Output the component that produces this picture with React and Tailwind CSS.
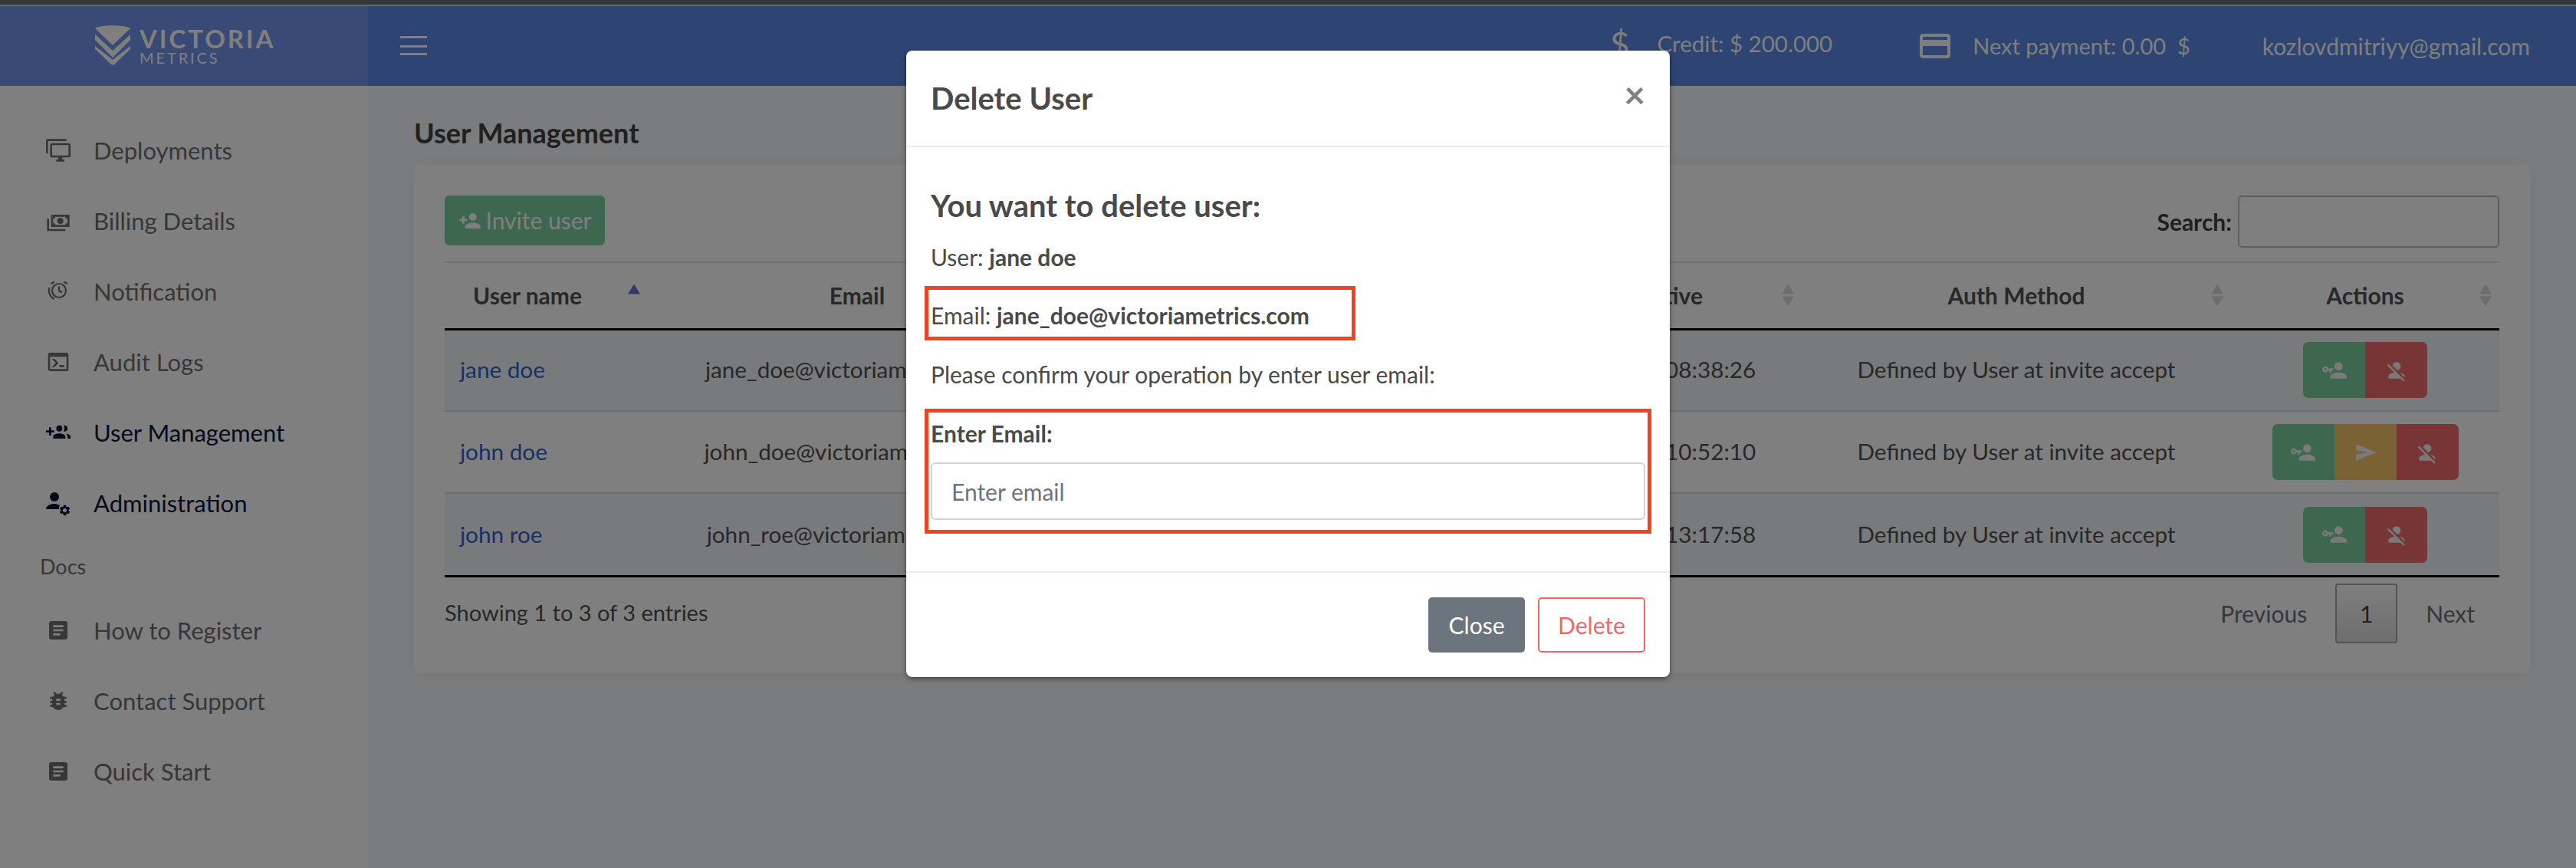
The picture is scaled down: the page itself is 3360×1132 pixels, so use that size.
import React from "react";
import { MdArticle, MdBugReport, MdCreditCard, MdSettings } from "react-icons/md";

const Mdi = ({ d, className }) => (
  <svg viewBox="0 0 24 24" className={className} fill="currentColor"><path d={d} /></svg>
);
const P = {
  monitor: "M22,17V7H6V17H22M22,5A2,2 0 0,1 24,7V17C24,18.11 23.1,19 22,19H16V21H18V23H10V21H12V19H6C4.89,19 4,18.11 4,17V7A2,2 0 0,1 6,5H22M2,3V15H0V3A2,2 0 0,1 2,1H20V3H2Z",
  cash: "M5,6H23V18H5V6M14,9A3,3 0 0,1 17,12A3,3 0 0,1 14,15A3,3 0 0,1 11,12A3,3 0 0,1 14,9M9,8A2,2 0 0,1 7,10V14A2,2 0 0,1 9,16H19A2,2 0 0,1 21,14V10A2,2 0 0,1 19,8H9M1,10H3V20H19V22H1V10Z",
  console: "M20,19V7H4V19H20M20,3A2,2 0 0,1 22,5V19A2,2 0 0,1 20,21H4A2,2 0 0,1 2,19V5C2,3.89 2.9,3 4,3H20M13,17V15H18V17H13M9.58,13L5.57,9H8.4L11.7,12.3C12.09,12.69 12.09,13.33 11.7,13.72L8.42,17H5.59L9.58,13Z",
  group: "M13 13C11 13 7 14 7 16V18H19V16C19 14 15 13 13 13M19.62 13.16C20.45 13.88 21 14.82 21 16V18H24V16C24 14.46 21.63 13.5 19.62 13.16M13 11A3 3 0 0 0 16 8A3 3 0 0 0 13 5A3 3 0 0 0 10 8A3 3 0 0 0 13 11M18 11A3 3 0 0 0 21 8A3 3 0 0 0 18 5C17.68 5 17.37 5.05 17.08 5.14C17.65 5.95 18 6.94 18 8C18 9.06 17.65 10.04 17.08 10.85C17.37 10.95 17.68 11 18 11M8 10H5V7H3V10H0V12H3V15H5V12H8V10Z",
  plus: "M15,14C12.33,14 7,15.33 7,18V20H23V18C23,15.33 17.67,14 15,14M6,10V7H4V10H1V12H4V15H6V12H9V10M15,12A4,4 0 0,0 19,8A4,4 0 0,0 15,4A4,4 0 0,0 11,8A4,4 0 0,0 15,12Z",
  key: "M11 10V12H9V14H7V12H5.8C5.4 13.2 4.3 14 3 14C1.3 14 0 12.7 0 11S1.3 8 3 8C4.3 8 5.4 8.8 5.8 10H11M3 10C2.4 10 2 10.4 2 11S2.4 12 3 12 4 11.6 4 11 3.6 10 3 10M16 14C18.7 14 24 15.3 24 18V20H8V18C8 15.3 13.3 14 16 14M16 12C13.8 12 12 10.2 12 8S13.8 4 16 4 20 5.8 20 8 18.2 12 16 12Z",
  off: "M12,4A4,4 0 0,1 16,8C16,9.95 14.6,11.58 12.75,11.93L8.07,7.25C8.42,5.4 10.05,4 12,4M12.28,14L18.28,20L20,21.72L18.73,23L15.73,20H4V18C4,16.16 6.5,14.61 9.87,14.14L2.78,7.05L4.05,5.78L12.28,14M20,18V19.18L15.14,14.32C18,14.93 20,16.35 20,18Z",
  send: "M3,4L23,12L3,20V14L15,12L3,10Z",
};

const Alarm = () => (
  <svg viewBox="0 0 32 32" className="w-[32px] h-[32px]" fill="none" stroke="currentColor" strokeWidth="2.2">
    <circle cx="17" cy="15" r="9" />
    <path d="M17 9.5V15.5L21 17.500" />
    <path d="M6.500 6L11 3.500" />
    <path d="M23 3.500L27.500 6" />
    <path d="M4.500 11C2.500 16 4.500 23 11 26" />
  </svg>
);
const UserCog = () => (
  <span className="relative block w-[32px] h-[32px]">
    <svg viewBox="0 0 32 32" className="w-[32px] h-[32px]" fill="currentColor">
      <circle cx="11" cy="8" r="6" />
      <path d="M0 24C0 19 6 17 11 17C14 17 17 18 18 19C17 21 16.500 23 17 24Z" />
    </svg>
    <MdSettings className="absolute right-[-1px] bottom-[-2px] w-[17px] h-[17px]" />
  </span>
);

const nav = [
  { label: "Deployments", icon: <Mdi d={P.monitor} className="w-[32px] h-[32px]" /> },
  { label: "Billing Details", icon: <Mdi d={P.cash} className="w-[32px] h-[32px]" /> },
  { label: "Notification", icon: <Alarm /> },
  { label: "Audit Logs", icon: <Mdi d={P.console} className="w-[32px] h-[32px]" /> },
  { label: "User Management", icon: <Mdi d={P.group} className="w-[32px] h-[32px]" />, active: true },
  { label: "Administration", icon: <UserCog />, active: true },
];
const docs = [
  { label: "How to Register", icon: <MdArticle className="w-[32px] h-[32px]" /> },
  { label: "Contact Support", icon: <MdBugReport className="w-[32px] h-[32px]" /> },
  { label: "Quick Start", icon: <MdArticle className="w-[32px] h-[32px]" /> },
];

const NavItem = ({ item }) => (
  <div className={"h-[92px] flex items-center pl-[60px] text-[31px] " + (item.active ? "text-[#0b1633]" : "text-[#6e6e6e]")}>
    <span className={"w-[62px] shrink-0 " + (item.active ? "text-[#0b1633]" : "text-[#6e6e6e]")}>{item.icon}</span>
    <span>{item.label}</span>
  </div>
);

const Sort = ({ active }) => (
  <span className="absolute right-[10px] top-1/2 -translate-y-1/2 flex flex-col gap-[3px] items-center">
    <span className={"w-0 h-0 border-x-[8px] border-x-transparent border-b-[13px] " + (active ? "border-b-[#6a6ed0]" : "border-b-[#dadada]")} />
    <span className={"w-0 h-0 border-x-[8px] border-x-transparent border-t-[13px] " + (active ? "border-t-transparent" : "border-t-[#dadada]")} />
  </span>
);

const Th = ({ children, active, left }) => (
  <th className={"relative font-bold text-[30px] " + (left ? "text-left pl-[37px]" : "text-center")}>
    {children}
    <Sort active={active} />
  </th>
);

const ActBtn = ({ color, d }) => (
  <span className={"w-[81px] h-[73px] flex items-center justify-center text-[#f5f5f5] " + color}>
    <Mdi d={d} className="w-[32px] h-[32px]" />
  </span>
);

const rows = [
  { name: "jane doe", email: "jane_doe@victoriametrics.com", time: "2023-03-17 08:38:26", resend: false, striped: true },
  { name: "john doe", email: "john_doe@victoriametrics.com", time: "2023-03-17 10:52:10", resend: true, striped: false },
  { name: "john roe", email: "john_roe@victoriametrics.com", time: "2023-03-17 13:17:58", resend: false, striped: true },
];

export default function App() {
  return (
    <div className="relative w-[3360px] h-[1132px] overflow-hidden bg-[#f6f8fb] text-[#404040] text-[30px] font-['Lato','Noto_Sans',sans-serif] flex flex-col">
      <div className="h-[6px] bg-[#6a6c74] shrink-0" />
      <div className="h-[2px] bg-[#cccccc] shrink-0" />
      <header className="h-[104px] shrink-0 flex bg-[#5c8ae6] text-[#ffffff]">
        <div className="w-[480px] shrink-0 bg-[#7094ea] flex items-center pl-[124px] gap-[12px]">
          <svg viewBox="0 0 46 52" className="w-[46px] h-[52px] mb-[2px]" fill="currentColor">
            <path d="M0 4C6 -1 40 -1 46 4L23 26Z" />
            <path d="M0 12L23 33L46 12V19L23 42L0 19Z" />
            <path d="M0 27L23 45L46 27V31L25 51C24 52 22 52 21 51L0 31Z" />
          </svg>
          <div className="flex flex-col">
            <span className="text-[33px] leading-[29px] font-bold tracking-[2.900px]">VICTORIA</span>
            <span className="text-[20px] leading-[20px] tracking-[2.900px]">METRICS</span>
          </div>
        </div>
        <div className="flex-1 flex items-center pl-[42px] pr-[60px]">
          <svg viewBox="0 0 35 26" className="w-[35px] h-[26px]" fill="currentColor">
            <rect y="0" width="35" height="3" />
            <rect y="12" width="35" height="3" />
            <rect y="22" width="35" height="3" />
          </svg>
          <div className="ml-auto flex items-center text-[#fcfcfc]">
            <span className="text-[44px] leading-none mr-[36px] mb-[6px]">$</span>
            <span className="text-[29.5px] mb-[6px]">Credit: $ 200.000</span>
            <MdCreditCard className="w-[48px] h-[48px] ml-[110px] mr-[25px]" />
            <span className="text-[29px] whitespace-pre">Next payment: 0.00  $</span>
            <span className="ml-[94px]">kozlovdmitriyy@gmail.com</span>
          </div>
        </div>
      </header>
      <div className="flex-1 flex min-h-0">
        <aside className="w-[480px] shrink-0 bg-white pt-[38px]">
          {nav.map((n) => <NavItem key={n.label} item={n} />)}
          <div className="h-[74px] pl-[52px] flex items-center text-[27px] text-[#6e6e6e]">Docs</div>
          {docs.map((n) => <NavItem key={n.label} item={n} />)}
        </aside>
        <main className="flex-1 px-[60px] pt-[38px]">
          <h1 className="text-[36px] leading-[46px] font-bold text-[#404040]">User Management</h1>
          <section className="mt-[19px] bg-white rounded-[8px] shadow-[0_4px_24px_rgba(0,0,0,0.04)] px-[40px] pt-[40px] h-[663px]">
            <div className="flex items-start justify-between h-[86px]">
              <button className="h-[65px] w-[209px] rounded-[6px] bg-[#7cce9f] text-white flex items-center justify-center gap-[6px]">
                <Mdi d={P.plus} className="w-[30px] h-[30px]" />
                <span>Invite user</span>
              </button>
              <label className="flex items-start gap-[8px] font-bold text-[#404040]">
                <span className="leading-[68px]">Search:</span>
                <input className="w-[341px] h-[68px] border-2 border-[#bdbdbd] rounded-[5px] bg-white" />
              </label>
            </div>
            <table className="w-full table-fixed border-collapse border-t-2 border-[#dedede] text-[29.7px] text-[#505050]">
              <colgroup>
                <col className="w-[265px]" /><col className="w-[546px]" /><col className="w-[554px]" /><col className="w-[405px]" /><col className="w-[560px]" /><col className="w-[350px]" />
              </colgroup>
              <thead>
                <tr className="h-[87px] border-b-[3px] border-black text-[#505050]">
                  <Th left active>User name</Th>
                  <Th>Email</Th>
                  <Th>Role</Th>
                  <Th>Last Active</Th>
                  <Th>Auth Method</Th>
                  <Th>Actions</Th>
                </tr>
              </thead>
              <tbody>
                {rows.map((r, i) => (
                  <tr key={r.name} className={"h-[107px] " + (i < 2 ? "border-b-2 border-[#dcdcdc] " : "") + (r.striped ? "bg-[#f3f4f7]" : "bg-white")}>
                    <td className="pl-[20px] text-[#2f62d0]">{r.name}</td>
                    <td className="text-center whitespace-nowrap">{r.email}</td>
                    <td />
                    <td className="text-center whitespace-nowrap">{r.time}</td>
                    <td className="text-center whitespace-nowrap">Defined by User at invite accept</td>
                    <td>
                      <div className="flex justify-center">
                        <div className="flex rounded-[7px] overflow-hidden">
                          <ActBtn color="bg-[#7cce9f]" d={P.key} />
                          {r.resend && <ActBtn color="bg-[#f7c46a]" d={P.send} />}
                          <ActBtn color="bg-[#ee6a6a]" d={P.off} />
                        </div>
                      </div>
                    </td>
                  </tr>
                ))}
              </tbody>
            </table>
            <div className="border-t-[3px] border-black flex items-start justify-between">
              <span className="mt-[24px] text-[29px] text-[#505050]">Showing 1 to 3 of 3 entries</span>
              <div className="mt-[8px] flex items-center text-[#6e6e6e] pr-[32px]">
                <span>Previous</span>
                <span className="ml-[37px] mr-[37px] w-[81px] h-[78px] flex items-center justify-center border-2 border-[#a8a8a8] rounded-[4px] bg-gradient-to-b from-white to-[#dcdcdc] text-[#404040]">1</span>
                <span>Next</span>
              </div>
            </div>
          </section>
        </main>
      </div>

      <div className="absolute inset-0 bg-black/50 flex justify-center items-start">
        <div className="mt-[66px] w-[996px] h-[817px] bg-white rounded-[8px] text-[#4a4a4a] shadow-[0_2px_6px_rgba(0,0,0,0.5)] flex flex-col">
          <div className="h-[126px] shrink-0 border-b-2 border-[#ecedf2] flex items-center justify-between pl-[32px] pr-[32px]">
            <h2 className="text-[40px] font-bold leading-none">Delete User</h2>
            <span className="text-[48px] font-bold leading-none text-[#808080] mb-[10px]">×</span>
          </div>
          <div className="flex-1 px-[32px] pt-[53px]">
            <h3 className="text-[40px] leading-[46px] font-bold">You want to delete user:</h3>
            <p className="mt-[24px] leading-[40px]">User: <b>jane doe</b></p>
            <p className="relative mt-[36px] leading-[40px]">
              Email: <b>jane_doe@victoriametrics.com</b>
              <span className="absolute left-[-8px] top-[-18px] w-[562px] h-[71px] border-[5px] border-[#ee4422]" />
            </p>
            <p className="mt-[37px] leading-[40px]">Please confirm your operation by enter user email:</p>
            <div className="relative mt-[37px]">
              <label className="block font-bold leading-[40px]">Enter Email:</label>
              <input className="mt-[18px] block w-[932px] h-[75px] px-[25px] border-2 border-[#cfd4da] rounded-[6px] placeholder:text-[#6c757d] outline-none" placeholder="Enter email" />
              <span className="absolute left-[-8px] top-[-12px] w-[948px] h-[163px] border-[5px] border-[#ee4422]" />
            </div>
          </div>
          <div className="h-[138px] shrink-0 border-t-2 border-[#ecedf2] flex items-center justify-end gap-[17px] pr-[32px]">
            <button className="w-[126px] h-[72px] rounded-[5px] bg-[#6c757d] text-white">Close</button>
            <button className="w-[140px] h-[72px] rounded-[5px] border-2 border-[#f0676b] text-[#f0676b] bg-white">Delete</button>
          </div>
        </div>
      </div>
    </div>
  );
}
